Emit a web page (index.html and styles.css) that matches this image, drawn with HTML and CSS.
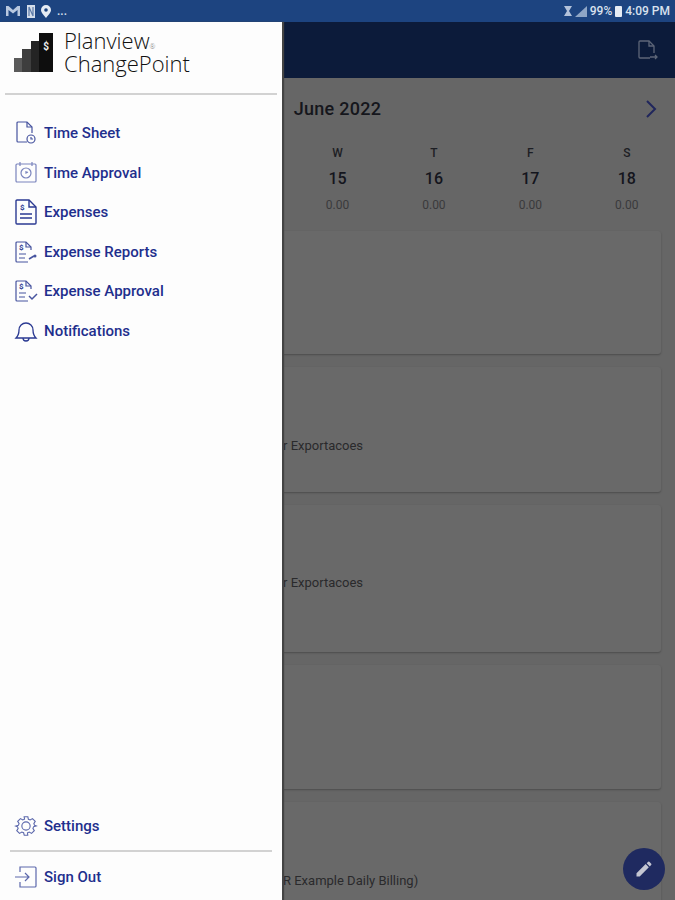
FILE: index.html
```html
<!DOCTYPE html>
<html lang="en">
<head>
  <meta charset="UTF-8">
  <title>Planview ChangePoint</title>
  <link rel="stylesheet" href="styles.css">
</head>
<body>
  <div class="screen">
    <div class="status-bar">
      <div class="status-left">
        <svg width="16" height="12" viewBox="0 0 16 12"><path d="M1 1h2.500L8 5l4.500-4H15v10h-2.500V5L8 8.500 3.500 5v6H1z" fill="#b9c8df"/></svg>
        <svg width="8" height="13" viewBox="0 0 8 13"><rect width="8" height="13" fill="#d5deeb"/><path d="M2 2v9M2 2l4 9M6 2v9" stroke="#5c7aa8" stroke-width="1.200" fill="none"/></svg>
        <svg width="10" height="13" viewBox="0 0 10 13"><path d="M5 0a5 5 0 0 1 5 5c0 3-3 5-5 8-2-3-5-5-5-8a5 5 0 0 1 5-5z" fill="#e6ecf4"/><circle cx="5" cy="5" r="1.800" fill="#1d4480"/></svg>
        <span class="status-dots">...</span>
      </div>
      <div class="status-right">
        <svg width="8" height="10" viewBox="0 0 8 10"><path d="M0 0h8L5 5l3 5H0l3-5z" fill="#b3c2da"/></svg>
        <svg class="signal" width="12" height="11" viewBox="0 0 12 11"><path d="M12 0v11H0z" fill="#8fa6c6"/></svg>
        <span>99%</span>
        <span class="battery"></span>
        <span>4:09 PM</span>
      </div>
    </div>

    <div class="app">
      <div class="app-bar">
        <svg width="24" height="24" viewBox="0 0 24 24" fill="none" stroke="#5d6678" stroke-width="1.300"><path d="M15 20H5a1 1 0 0 1-1-1V4a1 1 0 0 1 1-1h9l5 5v7"/><path d="M14 3v5h5M15 19h7M20 17l2 2-2 2"/></svg>
      </div>
      <div class="month-row">
        <span class="month-title">June 2022</span>
        <svg class="month-next" width="12" height="20" viewBox="0 0 12 20" fill="none" stroke="#20265c" stroke-width="2"><path d="M2 2l8 8-8 8"/></svg>
      </div>
      <div class="week">
        <div class="day"></div>
        <div class="day"></div>
        <div class="day"></div>
        <div class="day"><span class="day-name">W</span><span class="day-num">15</span><span class="day-hours">0.00</span></div>
        <div class="day"><span class="day-name">T</span><span class="day-num">16</span><span class="day-hours">0.00</span></div>
        <div class="day"><span class="day-name">F</span><span class="day-num">17</span><span class="day-hours">0.00</span></div>
        <div class="day"><span class="day-name">S</span><span class="day-num">18</span><span class="day-hours">0.00</span></div>
      </div>
      <div class="cards">
        <div class="card card-a"></div>
        <div class="card card-b"><p class="card-text text-b">r Exportacoes</p></div>
        <div class="card card-c"><p class="card-text text-c">r Exportacoes</p></div>
        <div class="card card-d"></div>
        <div class="card card-d"><p class="card-text text-e">R Example Daily Billing)</p></div>
      </div>
      <button class="fab">
        <svg width="20" height="20" viewBox="0 0 24 24"><path d="M3 17.200V21h3.800L17.800 9.900 14 6.100zM20.700 7a1 1 0 0 0 0-1.400l-2.300-2.300a1 1 0 0 0-1.400 0l-1.800 1.800 3.800 3.800z" fill="#c4c6d2"/></svg>
      </button>
    </div>

    <div class="drawer">
      <div class="logo">
        <svg width="39" height="39" viewBox="0 0 39 39">
          <rect x="0" y="25" width="8" height="14" fill="#5a5a5a"/>
          <rect x="8" y="16" width="9" height="23" fill="#3e3e3e"/>
          <rect x="17" y="8" width="8" height="31" fill="#242424"/>
          <rect x="25" y="0" width="14" height="39" fill="#0e0e0e"/>
          <text x="32" y="17" class="logo-dollar">$</text>
        </svg>
        <div class="logo-text">
          <span>Planview<small>®</small></span>
          <span>ChangePoint</span>
        </div>
      </div>

      <nav class="menu">
        <a class="menu-item">
          <svg width="24" height="24" viewBox="0 0 24 24" fill="none" stroke="#47549f" stroke-width="1.200"><path d="M13 21H4a1 1 0 0 1-1-1V2a1 1 0 0 1 1-1h9l5 5v6"/><path d="M13 1v5h5"/><circle cx="17" cy="18" r="4"/><path d="M17 16v2h2"/></svg>
          <span>Time Sheet</span>
        </a>
        <a class="menu-item">
          <svg width="24" height="24" viewBox="0 0 24 24" fill="none" stroke="#7a84bd" stroke-width="1.200"><rect x="2" y="3" width="20" height="18" rx="1"/><path d="M6 1v4M18 1v4"/><circle cx="12" cy="12" r="5"/><path d="M12 10v2l2-1"/></svg>
          <span>Time Approval</span>
        </a>
        <a class="menu-item">
          <svg width="24" height="26" viewBox="0 0 24 26" fill="none" stroke="#2b3a92" stroke-width="1.400"><path d="M15 1H3a1 1 0 0 0-1 1v22a1 1 0 0 0 1 1h18a1 1 0 0 0 1-1V8z"/><path d="M15 1v7h7M6 15h12M6 19h12"/><text x="6" y="11" class="icon-dollar">$</text></svg>
          <span>Expenses</span>
        </a>
        <a class="menu-item">
          <svg width="24" height="24" viewBox="0 0 24 24" fill="none" stroke="#47549f" stroke-width="1.200"><path d="M17 10V7l-5-5H3a1 1 0 0 0-1 1v18a1 1 0 0 0 1 1h11"/><path d="M12 2v5h5M5 14h7M5 18h6"/><path d="M15 19l5-3" stroke-width="1.600"/><circle cx="21" cy="16" r="1.500" fill="#47549f" stroke="none"/><text x="5" y="10" class="icon-dollar">$</text></svg>
          <span>Expense Reports</span>
        </a>
        <a class="menu-item">
          <svg width="24" height="24" viewBox="0 0 24 24" fill="none" stroke="#47549f" stroke-width="1.200"><path d="M17 10V7l-5-5H3a1 1 0 0 0-1 1v18a1 1 0 0 0 1 1h11"/><path d="M12 2v5h5M5 14h7M5 18h6"/><path d="M15 17l3 3 5-5" stroke-width="1.500"/><text x="5" y="10" class="icon-dollar">$</text></svg>
          <span>Expense Approval</span>
        </a>
        <a class="menu-item">
          <svg width="24" height="24" viewBox="0 0 24 24" fill="none" stroke="#2b3a92" stroke-width="1.300"><path d="M2 19c2-2 3-4 3-8a7 7 0 0 1 14 0c0 4 1 6 3 8z"/><path d="M9 19a3 3 0 0 0 6 0"/></svg>
          <span>Notifications</span>
        </a>
      </nav>

      <div class="drawer-bottom">
        <a class="menu-item">
          <svg width="24" height="24" viewBox="-1 -1 26 26" fill="none" stroke="#5c68ac" stroke-width="1.200"><path d="M10 2h4l.6 2.700 1.900.8L19 4l3 3-1.500 2.400.8 1.900L23 12l-2.700.7-.8 1.900L21 17l-3 3-2.500-1.500-1.900.8L13.900 22h-3.800l-.7-2.700-1.900-.8L5 20l-3-3 1.500-2.400-.8-1.900L1 12l2.700-.7.8-1.900L3 7l3-3 2.500 1.500 1.900-.8z"/><circle cx="12" cy="12" r="4.500"/></svg>
          <span>Settings</span>
        </a>
        <div class="bottom-rule"></div>
        <a class="menu-item">
          <svg width="24" height="24" viewBox="0 0 24 24" fill="none" stroke="#5c68ac" stroke-width="1.200"><path d="M6 7V2h15a1 1 0 0 1 1 1v18a1 1 0 0 1-1 1H6v-5"/><path d="M1 12h14M11 8l4 4-4 4"/></svg>
          <span>Sign Out</span>
        </a>
      </div>
    </div>
  </div>
</body>
</html>
```

FILE: styles.css
```css
* {
  box-sizing: border-box;
}

body {
  margin: 0;
  font-family: Roboto, sans-serif;
}

.screen {
  position: relative;
  width: 675px;
  height: 900px;
  overflow: hidden;
  background: #666;
}

/* status bar */
.status-bar {
  display: flex;
  justify-content: space-between;
  align-items: center;
  height: 22px;
  padding: 0 5px;
  background: #1d4480;
  color: #d9e1ee;
  font-size: 12px;
  font-weight: 500;
}

.status-left,
.status-right {
  display: flex;
  align-items: center;
}

.status-left {
  gap: 6px;
}

.status-right {
  gap: 3px;
}

.status-dots {
  line-height: 12px;
}

.battery {
  width: 7px;
  height: 11px;
  border-radius: 1px;
  background: #e6ecf4;
}

/* dimmed page behind the drawer */
.app {
  position: relative;
}

.app-bar {
  display: flex;
  justify-content: flex-end;
  align-items: center;
  height: 56px;
  padding-right: 16px;
  background: #0c1b3a;
}

.month-row {
  position: relative;
  display: flex;
  justify-content: center;
  align-items: center;
  height: 62px;
  padding-bottom: 2px;
}

.month-title {
  font-size: 18px;
  font-weight: 500;
  letter-spacing: 0.25px;
  color: #15161c;
}

.month-next {
  position: absolute;
  right: 18px;
  top: 21px;
}

.week {
  display: grid;
  grid-template-columns: repeat(7, 1fr);
  height: 91px;
  padding-top: 5px;
  text-align: center;
}

.day {
  display: flex;
  flex-direction: column;
  align-items: center;
}

.day-name {
  height: 17px;
  line-height: 16px;
  font-size: 12px;
  font-weight: 500;
  color: #1d1e24;
}

.day-num {
  height: 34px;
  line-height: 34px;
  font-size: 16px;
  font-weight: 500;
  color: #14151d;
}

.day-hours {
  height: 18px;
  line-height: 18px;
  font-size: 12px;
  color: #3a3a3c;
}

.cards {
  display: flex;
  flex-direction: column;
  gap: 13px;
  padding: 0 14px;
}

.card {
  border-radius: 3px;
  background: #696969;
  box-shadow: 0 1px 2px rgba(0, 0, 0, 0.26);
}

.card-a {
  height: 123px;
}

.card-b {
  height: 125px;
}

.card-c {
  height: 147px;
}

.card-d {
  height: 124px;
}

.card-text {
  margin: 0;
  padding-left: 269px;
  font-size: 13px;
  line-height: 16px;
  color: #2a2a2c;
}

.text-b {
  padding-top: 71px;
}

.text-c {
  padding-top: 70px;
}

.text-e {
  padding-top: 71px;
}

.fab {
  position: absolute;
  right: 10px;
  top: 826px;
  display: flex;
  justify-content: center;
  align-items: center;
  width: 42px;
  height: 42px;
  padding: 0;
  border: 0;
  border-radius: 50%;
  background: #1f2a60;
}

/* drawer */
.drawer {
  position: absolute;
  left: 0;
  top: 22px;
  bottom: 0;
  display: flex;
  flex-direction: column;
  width: 282px;
  background: #fdfdfd;
  box-shadow: 2px 0 1px #444;
}

.logo {
  display: flex;
  gap: 11px;
  height: 73px;
  margin: 0 5px;
  padding: 11px 0 0 9px;
  border-bottom: 2px solid #d2d2d2;
}

.logo-dollar {
  font-family: Roboto, sans-serif;
  font-size: 10px;
  font-weight: 700;
  text-anchor: middle;
  fill: #eee;
}

.logo-text {
  display: flex;
  flex-direction: column;
  margin-top: -4px;
  font-family: "Open Sans", sans-serif;
  font-size: 22px;
  font-weight: 300;
  line-height: 23px;
  color: #111;
}

.logo-text small {
  font-size: 7px;
  line-height: 0;
  color: #777;
}

.menu {
  display: flex;
  flex: 1;
  flex-direction: column;
  padding-top: 18.5px;
}

.menu-item {
  display: flex;
  align-items: center;
  gap: 6px;
  height: 39.5px;
  padding-left: 14px;
  font-size: 15px;
  font-weight: 500;
  color: #1f2f8d;
}

.icon-dollar {
  font-family: Roboto, sans-serif;
  font-size: 8px;
  font-weight: 700;
  fill: #2b3a92;
  stroke: none;
}

.drawer-bottom {
  display: flex;
  flex-direction: column;
  padding-bottom: 3px;
}

.bottom-rule {
  height: 2px;
  margin: 4px 10px 6px;
  background: #d2d2d2;
}
```
